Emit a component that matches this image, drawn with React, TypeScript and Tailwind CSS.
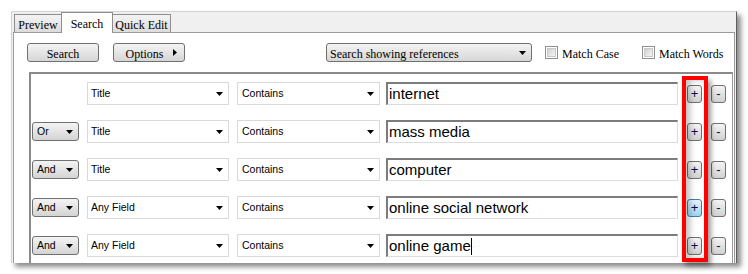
import React from "react";

const serif = "font-['Liberation_Serif','Times_New_Roman',serif]";
const sans = "font-['Liberation_Sans',Arial,sans-serif]";

const DownArrow = ({ className = "" }: { className?: string }) => (
  <svg width="7" height="4" viewBox="0 0 7 4" className={className}>
    <polygon points="0,0 7,0 3.5,4" fill="#000" />
  </svg>
);

const Checkbox = () => (
  <div className="w-[13px] h-[13px] border border-[#8f8f8f] bg-white p-[1px]">
    <div className="w-full h-full border border-[#c8c8c8] bg-gradient-to-br from-[#cfcfcf] to-[#f6f6f6]" />
  </div>
);

interface Row {
  bool?: string;
  field: string;
  text: string;
  focused?: boolean;
  cursor?: boolean;
}

const rows: Row[] = [
  { field: "Title", text: "internet" },
  { bool: "Or", field: "Title", text: "mass media" },
  { bool: "And", field: "Title", text: "computer" },
  { bool: "And", field: "Any Field", text: "online social network", focused: true },
  { bool: "And", field: "Any Field", text: "online game", cursor: true },
];

const SmallButton = ({ label, focused }: { label: string; focused?: boolean }) => (
  <div
    className={`w-[15px] h-[18px] rounded-[3px] border flex items-center justify-center text-[13px] leading-none text-[#0a0a50] ${sans} ${
      focused
        ? "border-[#3c7fb1] bg-gradient-to-b from-[#e5f4fc] to-[#9fd3f1]"
        : "border-[#707070] bg-gradient-to-b from-[#f4f4f4] to-[#d2d2d2]"
    }`}
  >
    {label}
  </div>
);

const SearchRow = ({ row }: { row: Row }) => (
  <div className="flex items-center h-[23px]">
    <div className="w-[48px] pl-[1px]">
      {row.bool && (
        <div
          className={`w-[47px] h-[19px] rounded-[3px] border border-[#707070] bg-gradient-to-b from-[#f4f4f4] to-[#d4d4d4] flex items-center justify-between pl-[4px] pr-[5px] text-[10.5px] text-black ${sans}`}
        >
          <span>{row.bool}</span>
          <DownArrow />
        </div>
      )}
    </div>
    <div
      className={`ml-[8px] w-[142px] h-[23px] border border-[#d9d9d9] bg-white flex items-center justify-between pl-[3px] pr-[5px] pt-[1px] text-[10.5px] text-black ${sans}`}
    >
      <span>{row.field}</span>
      <DownArrow />
    </div>
    <div
      className={`ml-[8px] w-[143px] h-[23px] border border-[#d9d9d9] bg-white flex items-center justify-between pl-[4px] pr-[5px] pt-[1px] text-[10.5px] text-black ${sans}`}
    >
      <span>Contains</span>
      <DownArrow />
    </div>
    <div
      className={`ml-[6px] w-[292px] h-[23px] border-t-2 border-l-2 border-t-[#7c7c7c] border-l-[#7c7c7c] border-r border-b border-r-[#dcdcdc] border-b-[#dcdcdc] bg-white flex items-center pl-[1px] pt-[1px] text-[15px] text-black ${sans}`}
    >
      <span className="whitespace-pre">{row.text}</span>
      {row.cursor && <span className="w-px h-[17px] bg-black" />}
    </div>
    <div className="ml-[9px]">
      <SmallButton label="+" focused={row.focused} />
    </div>
    <div className="ml-[9px]">
      <SmallButton label="-" />
    </div>
  </div>
);

export default function App() {
  return (
    <div className="relative w-[748px] h-[274px] bg-white overflow-hidden pt-[11px] pl-[11px]">
      <div className="w-[726px] h-[252px] flex flex-col border-l border-t border-l-[#d4d4d4] border-t-[#d4d4d4] border-r border-r-[#5e5e5e] bg-[#f0f0f0] shadow-[4px_4px_5px_rgba(0,0,0,0.45)] overflow-hidden">
        {/* tabs */}
        <div className={`h-[21px] flex items-end pl-[2px] text-[12px] text-black ${serif}`}>
          <div className="w-[48px] h-[18px] border border-[#8e8e8e] border-b-0 bg-gradient-to-b from-[#f4f4f4] to-[#dcdcdc] flex items-center justify-center pt-[2px]">
            Preview
          </div>
          <div className="relative z-10 -ml-px -mb-px w-[52px] h-[21px] border border-[#8e8e8e] border-b-0 bg-white flex items-start pt-[2px] justify-center">
            Search
          </div>
          <div className="-ml-px w-[59px] h-[18px] border border-[#8e8e8e] border-b-0 bg-gradient-to-b from-[#f4f4f4] to-[#dcdcdc] flex items-center justify-center pt-[2px]">
            Quick Edit
          </div>
        </div>

        {/* content */}
        <div className="flex-1 ml-[1px] mr-[1px] border-t border-l border-r border-[#9a9a9a] bg-white">
          <div className={`flex items-center pt-[10px] pl-[13px] h-[29px] text-[12px] text-black ${serif}`}>
            <div className="w-[72px] h-[19px] rounded-[3px] border border-[#707070] bg-gradient-to-b from-[#f4f4f4] to-[#d6d6d6] flex items-center justify-center pt-[2px]">
              Search
            </div>
            <div className="ml-[14px] w-[72px] h-[19px] rounded-[3px] border border-[#707070] bg-gradient-to-b from-[#f4f4f4] to-[#d6d6d6] flex items-center justify-center gap-[9px] pl-[4px]">
              <span className="pt-[2px]">Options</span>
              <svg width="4" height="7" viewBox="0 0 4 7">
                <polygon points="0,0 4,3.5 0,7" fill="#000" />
              </svg>
            </div>
            <div className="ml-[141px] w-[206px] h-[19px] rounded-[3px] border border-[#707070] bg-gradient-to-b from-[#f4f4f4] to-[#d6d6d6] flex items-center justify-between pl-[3px] pr-[5px]">
              <span className="pt-[2px]">Search showing references</span>
              <DownArrow />
            </div>
            <div className="ml-[13px] flex items-center gap-[4px]">
              <Checkbox />
              <span className="pt-[2px]">Match Case</span>
            </div>
            <div className="ml-[23px] flex items-center gap-[4px]">
              <Checkbox />
              <span className="pt-[2px]">Match Words</span>
            </div>
          </div>

          <div className="mt-[10px] ml-[15px] w-[704px] h-[200px] border-t-2 border-l-2 border-r border-t-[#8a8a8a] border-l-[#8a8a8a] border-r-[#9a9a9a] pt-[8px] flex flex-col gap-[15px]">
            {rows.map((row, i) => (
              <SearchRow key={i} row={row} />
            ))}
          </div>
        </div>
      </div>

      {/* highlight annotation */}
      <div className="absolute left-[682px] top-[76px] w-[26px] h-[186px] border-4 border-[#ff0000] shadow-[3px_4px_5px_rgba(0,0,0,0.4),inset_4px_0_6px_rgba(0,0,0,0.25)] pointer-events-none" />
    </div>
  );
}
